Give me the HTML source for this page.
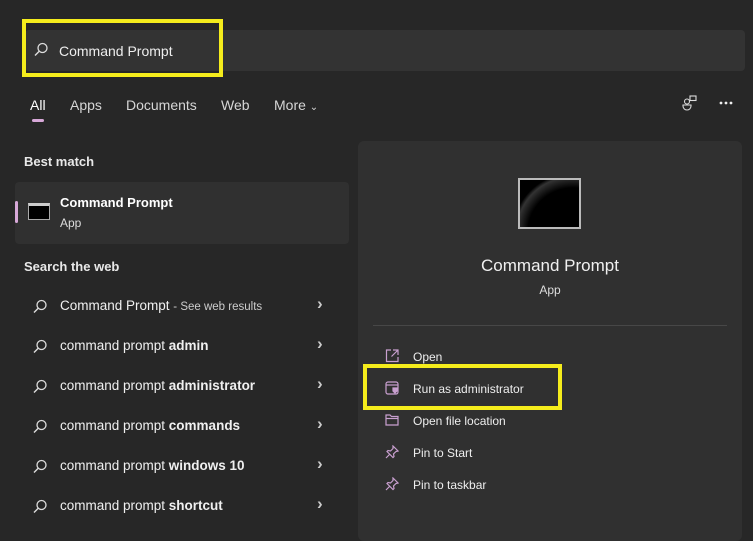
<!DOCTYPE html>
<html><head><style>
*{margin:0;padding:0;box-sizing:border-box}
body{width:753px;height:532px;background:#272727;font-family:"Liberation Sans",sans-serif;color:#fff;position:relative;overflow:hidden}
.a{position:absolute}
.t{font-size:13px;white-space:nowrap}
.sb{left:25px;top:30px;width:720px;height:41px;background:#333333;border-radius:4px}
.yl{border:4px solid #f5ec1c}
.tab{top:97px;font-size:14px;color:#d6d6d6}
.h{font-size:13px;font-weight:bold;color:#e8e8e8}
.row{left:33px;font-size:13.5px;color:#f0f0f0;white-space:nowrap}
.row b{font-weight:bold}
.chev{left:317px;color:#ccc;font-size:17px;font-weight:bold}
.act{left:413px;font-size:12px;color:#eee}
</style></head><body>
<div class="a sb"></div>
<div class="a yl" style="left:22px;top:19px;width:201px;height:58px"></div>
<svg class="a" style="left:33px;top:42px" width="16" height="16" viewBox="0 0 16 16"><circle cx="9.5" cy="6" r="4.5" fill="none" stroke="#ddd" stroke-width="1.3"/><line x1="6.2" y1="9.3" x2="2" y2="13.5" stroke="#ddd" stroke-width="1.4"/></svg>
<div class="a t" style="left:59px;top:43px;font-size:14px;color:#eee">Command Prompt</div>

<div class="a tab" style="left:30px;color:#fff">All</div>
<div class="a" style="left:32px;top:119px;width:12px;height:3px;border-radius:2px;background:#d7a8d8"></div>
<div class="a tab" style="left:70px">Apps</div>
<div class="a tab" style="left:126px">Documents</div>
<div class="a tab" style="left:221px">Web</div>
<div class="a tab" style="left:274px">More <span style="font-size:10px">⌄</span></div>
<svg class="a" style="left:680px;top:94px" width="20" height="18" viewBox="0 0 20 18"><circle cx="7" cy="7.5" r="2.5" fill="none" stroke="#ddd" stroke-width="1.1"/><rect x="10" y="2" width="6" height="4.5" fill="none" stroke="#ddd" stroke-width="1.1"/><path d="M3 11h8v1a4 4 0 0 1-8 0z" fill="none" stroke="#ddd" stroke-width="1.1"/></svg>
<svg class="a" style="left:718px;top:100px" width="16" height="6"><circle cx="3" cy="3" r="1.4" fill="#eee"/><circle cx="8" cy="3" r="1.4" fill="#eee"/><circle cx="13" cy="3" r="1.4" fill="#eee"/></svg>

<div class="a h" style="left:24px;top:154px">Best match</div>
<div class="a" style="left:15px;top:182px;width:334px;height:62px;background:#303030;border-radius:4px"></div>
<div class="a" style="left:15px;top:201px;width:3px;height:22px;background:#d7a8d8;border-radius:2px"></div>
<div class="a" style="left:28px;top:203px;width:22px;height:17px;background:#000;border:1px solid #aaa;border-top:3px solid #ccc"></div>
<div class="a t" style="left:60px;top:195px;font-weight:bold">Command Prompt</div>
<div class="a t" style="left:60px;top:216px;font-size:12px;color:#ddd">App</div>

<div class="a h" style="left:24px;top:259px">Search the web</div>
<div id="rows"></div>
<script>
var r=[["Command Prompt",' <span style="font-size:11.5px;color:#ccc">- See web results</span>'],["command prompt ","<b>admin</b>"],["command prompt ","<b>administrator</b>"],["command prompt ","<b>commands</b>"],["command prompt ","<b>windows 10</b>"],["command prompt ","<b>shortcut</b>"]];
var h="";r.forEach(function(x,i){var y=298+i*40;
h+='<svg class="a" style="left:32px;top:'+(y+1)+'px" width="16" height="16" viewBox="0 0 16 16"><circle cx="9.5" cy="6" r="4.5" fill="none" stroke="#ddd" stroke-width="1.3"/><line x1="6.2" y1="9.3" x2="2" y2="13.5" stroke="#ddd" stroke-width="1.4"/></svg>';
h+='<div class="a row" style="left:60px;top:'+y+'px">'+x[0]+x[1]+'</div><div class="a chev" style="top:'+(y-4)+'px">&#x203A;</div>';});
document.getElementById("rows").innerHTML=h;
</script>

<div class="a" style="left:358px;top:141px;width:384px;height:400px;background:#303030;border-radius:6px"></div>
<div class="a" style="left:518px;top:178px;width:63px;height:51px;background:radial-gradient(ellipse at 90% 110%,#000 60%,#333 75%,#000 80%);border:2px solid #bbb"></div>
<div class="a" style="left:358px;top:256px;width:384px;text-align:center;font-size:17px;color:#f0f0f0">Command Prompt</div>
<div class="a" style="left:358px;top:283px;width:384px;text-align:center;font-size:12px;color:#ddd">App</div>
<div class="a" style="left:373px;top:325px;width:354px;height:1px;background:#474747"></div>

<svg class="a" style="left:385px;top:349px" width="14" height="14" viewBox="0 0 14 14" fill="none" stroke="#c9a0d0" stroke-width="1.2"><path d="M6 1H1.5v11.5H13V8M8 1h5v5M13 1L6.5 7.5"/></svg>
<div class="a act" style="top:350px">Open</div>
<svg class="a" style="left:385px;top:381px" width="14" height="14" viewBox="0 0 14 14" fill="none" stroke="#c9a0d0" stroke-width="1.2"><rect x="1" y="1" width="12" height="12" rx="2"/><line x1="1" y1="4" x2="13" y2="4"/><path d="M8 7h4v3l-2 2-2-2z" fill="#c9a0d0"/></svg>
<div class="a act" style="top:382px">Run as administrator</div>
<div class="a yl" style="left:363px;top:364px;width:199px;height:46px"></div>
<svg class="a" style="left:385px;top:413px" width="14" height="14" viewBox="0 0 14 14" fill="none" stroke="#c9a0d0" stroke-width="1.2"><path d="M1 2h4l1.5 1.5H13V12H1z"/><line x1="1" y1="5.5" x2="13" y2="5.5"/></svg>
<div class="a act" style="top:414px">Open file location</div>
<svg class="a" style="left:385px;top:445px" width="14" height="14" viewBox="0 0 14 14" fill="none" stroke="#c9a0d0" stroke-width="1.2"><path d="M8 1l5 5-2 .5-2.5 2.5.5 2.5-1 1-6-6 1-1 2.5.5L8 3.5zM4.5 9.5L1 13"/></svg>
<div class="a act" style="top:446px">Pin to Start</div>
<svg class="a" style="left:385px;top:477px" width="14" height="14" viewBox="0 0 14 14" fill="none" stroke="#c9a0d0" stroke-width="1.2"><path d="M8 1l5 5-2 .5-2.5 2.5.5 2.5-1 1-6-6 1-1 2.5.5L8 3.5zM4.5 9.5L1 13"/></svg>
<div class="a act" style="top:478px">Pin to taskbar</div>
</body></html>
